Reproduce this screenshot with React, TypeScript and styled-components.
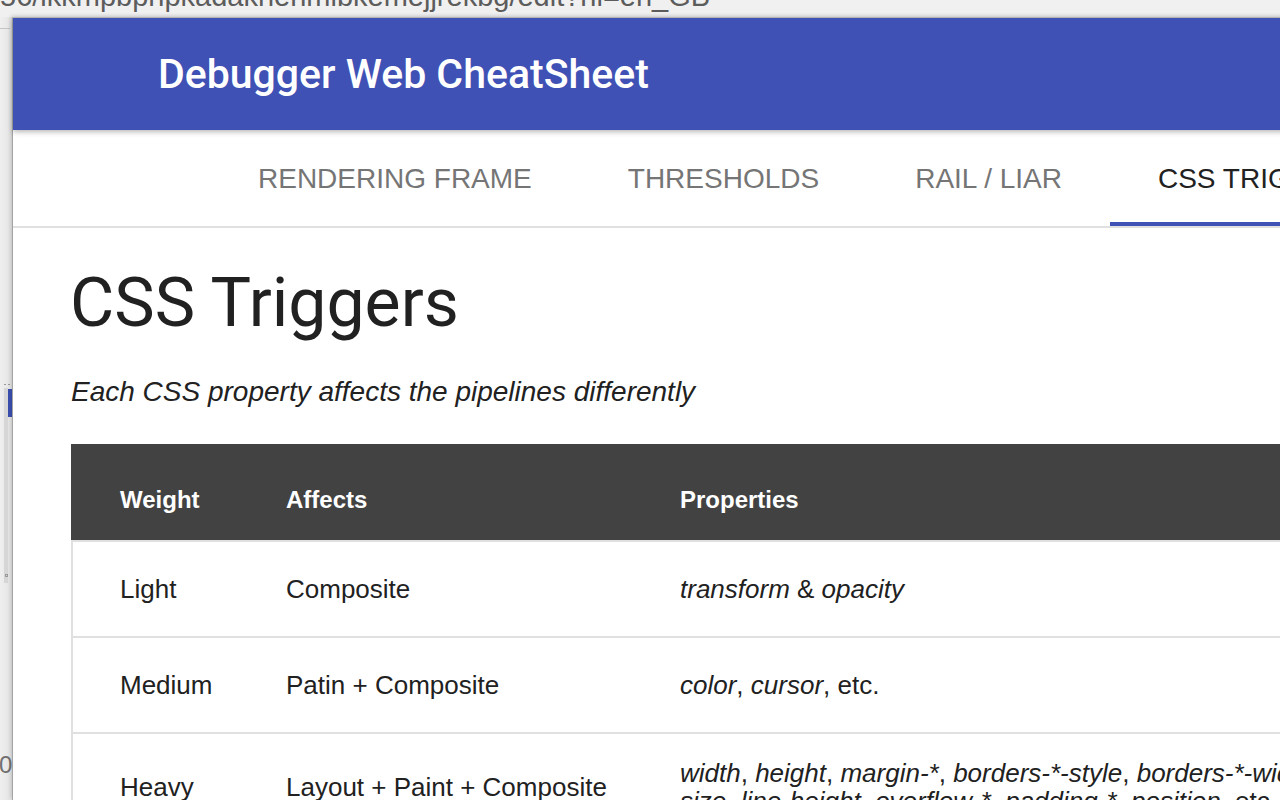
import React from 'react';
import styled, { createGlobalStyle } from 'styled-components';

const Global = createGlobalStyle`
  html, body {
    margin: 0;
    padding: 0;
    width: 1280px;
    height: 800px;
    overflow: hidden;
    background: #ececec;
  }
  #root {
    width: 1280px;
    height: 800px;
    overflow: hidden;
  }
`;

const Screen = styled.div`
  display: grid;
  grid-template-columns: 12px 1520px;
  grid-template-rows: 17px 783px;
  width: 1280px;
  height: 800px;
  overflow: hidden;
  background: #ececec;
`;

const UrlStrip = styled.div`
  grid-column: 1 / span 2;
  overflow: hidden;
  background: #f0f0f0;
`;

const UrlText = styled.div`
  font-family: "Liberation Sans", Arial, sans-serif;
  font-size: 29px;
  line-height: 26px;
  margin-top: -17px;
  color: #5c5c5c;
  white-space: nowrap;
`;

const SideStrip = styled.div`
  display: flex;
  flex-direction: column;
  overflow: hidden;
  background: linear-gradient(to right, #efefef, #e3e3e3);
`;

const SideRule = styled.div`
  margin-top: 11px;
  width: 10px;
  height: 1px;
  background: #c4c4c4;
`;

const SideDashes = styled.div`
  display: flex;
  gap: 2px;
  margin-top: 355px;
  padding-left: 4px;
  height: 1px;
`;

const Dash = styled.span`
  width: 2px;
  height: 1px;
  background: #9a9a9a;
`;

const SideTrack = styled.div`
  display: flex;
  margin-top: 3px;
  margin-left: 4px;
  height: 195px;
`;

const TrackGroove = styled.div`
  width: 4px;
  background: #d6d6d6;
  display: flex;
  flex-direction: column;
  justify-content: flex-end;
  align-items: center;
  padding-bottom: 6px;
  box-sizing: border-box;
`;

const TrackKnob = styled.span`
  width: 3px;
  height: 3px;
  border: 1px solid #9a9a9a;
  box-sizing: border-box;
`;

const TrackThumb = styled.div`
  width: 4px;
  height: 28px;
  margin-top: 1px;
  background: #3b4fb0;
`;

const SideGlyph = styled.span`
  margin-top: 170px;
  margin-left: -1px;
  font-family: "Liberation Sans", Arial, sans-serif;
  font-size: 24px;
  line-height: 24px;
  color: #707070;
`;

const Window = styled.div`
  background: #fff;
  border-top: 1px solid #bdbdbd;
  border-left: 1px solid #a4a4a4;
  box-shadow: -1px -1px 4px rgba(0, 0, 0, 0.16);
  display: flex;
  flex-direction: column;
  min-width: 0;
`;

const AppBar = styled.header`
  height: 112px;
  flex: none;
  display: flex;
  align-items: center;
  padding-left: 145px;
  background: #3f51b5;
  box-shadow: 0 2px 5px rgba(0, 0, 0, 0.28);
  position: relative;
  z-index: 1;
`;

const AppTitle = styled.h1`
  margin: 0;
  font-family: Roboto, "Noto Sans", sans-serif;
  font-weight: 500;
  font-size: 41px;
  line-height: 40px;
  color: #fff;
`;

const TabBar = styled.nav`
  display: flex;
  flex: none;
  height: 96px;
  padding-left: 197px;
  border-bottom: 2px solid #e0e0e0;
`;

const Tab = styled.div<{ $active?: boolean }>`
  display: flex;
  align-items: center;
  padding: 2px 48px 0;
  font-family: "Liberation Sans", Arial, sans-serif;
  font-size: 28px;
  line-height: 32px;
  text-transform: uppercase;
  white-space: nowrap;
  color: ${(p) => (p.$active ? '#212121' : '#757575')};
  box-shadow: ${(p) => (p.$active ? 'inset 0 -4px 0 #3f51b5' : 'none')};
`;

const Content = styled.main`
  padding: 0 58px;
`;

const Heading = styled.h2`
  margin: 41px 0 0 -1px;
  font-family: Roboto, "Noto Sans", sans-serif;
  font-weight: 400;
  font-size: 68px;
  line-height: 68px;
  color: #212121;
`;

const Lead = styled.p`
  margin: 39px 0 0;
  font-family: "Liberation Sans", Arial, sans-serif;
  font-style: italic;
  font-size: 28px;
  line-height: 32px;
  color: #212121;
`;

const Table = styled.table`
  margin-top: 36px;
  border-collapse: separate;
  border-spacing: 0;
  table-layout: fixed;
  width: 1377px;
  font-family: "Liberation Sans", Arial, sans-serif;
`;

const HeadRow = styled.tr`
  height: 96px;
`;

const HeadCell = styled.th`
  background: #424242;
  color: #fff;
  font-weight: 700;
  font-size: 24px;
  line-height: 28px;
  text-align: left;
  padding: 16px 0 0 49px;
  vertical-align: middle;
`;

const BodyRow = styled.tr`
  height: 96px;
`;

const Cell = styled.td<{ $first?: boolean; $last?: boolean }>`
  border-top: 2px solid #e0e0e0;
  border-left: ${(p) => (p.$first ? '2px solid #e0e0e0' : 'none')};
  padding: 25px ${(p) => (p.$last ? '48px' : '0')} 25px ${(p) => (p.$first ? '47px' : '49px')};
  vertical-align: middle;
  font-size: 26px;
  line-height: 28px;
  color: #212121;
`;

const rows: { weight: string; affects: string; props: React.ReactNode }[] = [
  {
    weight: 'Light',
    affects: 'Composite',
    props: (
      <>
        <em>transform</em> &amp; <em>opacity</em>
      </>
    ),
  },
  {
    weight: 'Medium',
    affects: 'Patin + Composite',
    props: (
      <>
        <em>color</em>, <em>cursor</em>, etc.
      </>
    ),
  },
  {
    weight: 'Heavy',
    affects: 'Layout + Paint + Composite',
    props: (
      <>
        <em>width</em>, <em>height</em>, <em>margin-*</em>, <em>borders-*-style</em>,{' '}
        <em>borders-*-width</em>, <em>font-size</em>, <em>line-height</em>,{' '}
        <em>overflow-*</em>, <em>padding-*</em>, <em>position</em>, etc.
      </>
    ),
  },
];

const tabs = ['Rendering Frame', 'Thresholds', 'RAIL / LIAR', 'CSS Triggers'];

export default function App() {
  return (
    <>
      <Global />
      <Screen>
        <UrlStrip>
          <UrlText>56/ikkmpbpnpkadaknenmibkemejjrekbg/edit?hl=en_GB</UrlText>
        </UrlStrip>
        <SideStrip>
          <SideRule />
          <SideDashes>
            <Dash />
            <Dash />
          </SideDashes>
          <SideTrack>
            <TrackGroove>
              <TrackKnob />
            </TrackGroove>
            <TrackThumb />
          </SideTrack>
          <SideGlyph>0</SideGlyph>
        </SideStrip>
        <Window>
          <AppBar>
            <AppTitle>Debugger Web CheatSheet</AppTitle>
          </AppBar>
          <TabBar>
            {tabs.map((t, i) => (
              <Tab key={t} $active={i === 3}>
                {t}
              </Tab>
            ))}
          </TabBar>
          <Content>
            <Heading>CSS Triggers</Heading>
            <Lead>Each CSS property affects the pipelines differently</Lead>
            <Table>
              <colgroup>
                <col style={{ width: 166 }} />
                <col style={{ width: 394 }} />
                <col style={{ width: 817 }} />
              </colgroup>
              <thead>
                <HeadRow>
                  <HeadCell>Weight</HeadCell>
                  <HeadCell>Affects</HeadCell>
                  <HeadCell>Properties</HeadCell>
                </HeadRow>
              </thead>
              <tbody>
                {rows.map((r) => (
                  <BodyRow key={r.weight}>
                    <Cell $first>{r.weight}</Cell>
                    <Cell>{r.affects}</Cell>
                    <Cell $last>{r.props}</Cell>
                  </BodyRow>
                ))}
              </tbody>
            </Table>
          </Content>
        </Window>
      </Screen>
    </>
  );
}
